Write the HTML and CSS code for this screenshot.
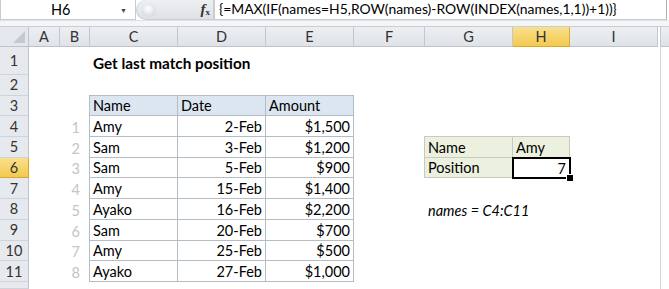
FILE: index.html
```html
<!DOCTYPE html>
<html>
    <head>
        <title>Get last match position</title>
        <meta name="viewport" content="width=device-width, initial-scale=1">
        <link rel="stylesheet" href="styles.css">
    </head>
    <body>
        <div class="formula-bar">
            <div class="name-box"><span>H6</span><span class="drop">&#9660;</span></div>
            <div class="grip"><span class="knob"></span><span class="fx"><i>f</i><sub>x</sub></span></div>
            <div class="formula">{=MAX(IF(names=H5,ROW(names)-ROW(INDEX(names,1,1))+1))}</div>
        </div>
        <div class="strip"></div>

        <div class="sheet">
            <div class="corner"><span class="tri"></span></div>
            <div class="colhead">A</div>
            <div class="colhead">B</div>
            <div class="colhead">C</div>
            <div class="colhead">D</div>
            <div class="colhead">E</div>
            <div class="colhead">F</div>
            <div class="colhead">G</div>
            <div class="colhead active">H</div>
            <div class="colhead">I</div>
            <div class="colhead edge"></div>

            <div class="rowhead" style="grid-row: 2;">1</div>
            <div class="rowhead" style="grid-row: 3;">2</div>
            <div class="rowhead" style="grid-row: 4;">3</div>
            <div class="rowhead" style="grid-row: 5;">4</div>
            <div class="rowhead" style="grid-row: 6;">5</div>
            <div class="rowhead active" style="grid-row: 7;">6</div>
            <div class="rowhead" style="grid-row: 8;">7</div>
            <div class="rowhead" style="grid-row: 9;">8</div>
            <div class="rowhead" style="grid-row: 10;">9</div>
            <div class="rowhead" style="grid-row: 11;">10</div>
            <div class="rowhead" style="grid-row: 12;">11</div>
            <div class="rowhead" style="grid-row: 13;"></div>
            <div class="rightedge"></div>

            <div class="title">Get last match position</div>

            <!-- data table C3:E11 -->
            <div class="cell th first" style="grid-row: 4; grid-column: 4;">Name</div>
            <div class="cell th" style="grid-row: 4; grid-column: 5;">Date</div>
            <div class="cell th" style="grid-row: 4; grid-column: 6;">Amount</div>

            <div class="idx" style="grid-row: 5;">1</div>
            <div class="cell first" style="grid-row: 5; grid-column: 4;">Amy</div>
            <div class="cell num" style="grid-row: 5; grid-column: 5;">2-Feb</div>
            <div class="cell num" style="grid-row: 5; grid-column: 6;">$1,500</div>

            <div class="idx" style="grid-row: 6;">2</div>
            <div class="cell first" style="grid-row: 6; grid-column: 4;">Sam</div>
            <div class="cell num" style="grid-row: 6; grid-column: 5;">3-Feb</div>
            <div class="cell num" style="grid-row: 6; grid-column: 6;">$1,200</div>

            <div class="idx" style="grid-row: 7;">3</div>
            <div class="cell first" style="grid-row: 7; grid-column: 4;">Sam</div>
            <div class="cell num" style="grid-row: 7; grid-column: 5;">5-Feb</div>
            <div class="cell num" style="grid-row: 7; grid-column: 6;">$900</div>

            <div class="idx" style="grid-row: 8;">4</div>
            <div class="cell first" style="grid-row: 8; grid-column: 4;">Amy</div>
            <div class="cell num" style="grid-row: 8; grid-column: 5;">15-Feb</div>
            <div class="cell num" style="grid-row: 8; grid-column: 6;">$1,400</div>

            <div class="idx" style="grid-row: 9;">5</div>
            <div class="cell first" style="grid-row: 9; grid-column: 4;">Ayako</div>
            <div class="cell num" style="grid-row: 9; grid-column: 5;">16-Feb</div>
            <div class="cell num" style="grid-row: 9; grid-column: 6;">$2,200</div>

            <div class="idx" style="grid-row: 10;">6</div>
            <div class="cell first" style="grid-row: 10; grid-column: 4;">Sam</div>
            <div class="cell num" style="grid-row: 10; grid-column: 5;">20-Feb</div>
            <div class="cell num" style="grid-row: 10; grid-column: 6;">$700</div>

            <div class="idx" style="grid-row: 11;">7</div>
            <div class="cell first" style="grid-row: 11; grid-column: 4;">Amy</div>
            <div class="cell num" style="grid-row: 11; grid-column: 5;">25-Feb</div>
            <div class="cell num" style="grid-row: 11; grid-column: 6;">$500</div>

            <div class="idx" style="grid-row: 12;">8</div>
            <div class="cell first" style="grid-row: 12; grid-column: 4;">Ayako</div>
            <div class="cell num" style="grid-row: 12; grid-column: 5;">27-Feb</div>
            <div class="cell num" style="grid-row: 12; grid-column: 6;">$1,000</div>

            <!-- lookup G5:H6 -->
            <div class="cell lk top first" style="grid-row: 6; grid-column: 8;">Name</div>
            <div class="cell lk top" style="grid-row: 6; grid-column: 9;">Amy</div>
            <div class="cell lk first" style="grid-row: 7; grid-column: 8;">Position</div>
            <div class="cell num selected" style="grid-row: 7; grid-column: 9;">7</div>

            <div class="note">names = C4:C11</div>
        </div>
    </body>
</html>
```

FILE: styles.css
```css
* { box-sizing: border-box; }
body { margin: 0; width: 669px; height: 289px; overflow: hidden; background: #fff; font-family: Lato, "Open Sans", sans-serif; font-size: 14.5px; color: #000; }

/* formula bar */
.formula-bar { display: flex; height: 20px; background: #fff; }
.name-box { width: 136px; display: flex; align-items: center; justify-content: space-between; padding: 0 8px 0 50px; border: 1px solid #c6ccd4; border-top: 0; }
.name-box .drop { font-size: 7px; color: #444; }
.grip { width: 78px; display: flex; align-items: center; justify-content: space-between; padding-right: 3px; background: linear-gradient(#eef0f3, #dde1e6); border-radius: 10px 0 0 10px; border: 1px solid #c9ced5; border-top: 0; }
.grip .knob { width: 14px; height: 14px; margin-left: 5px; border-radius: 50%; background: radial-gradient(circle at 45% 40%, #fff, #d8dce2 70%); }
.fx { font-family: "Liberation Serif", serif; font-weight: bold; font-size: 15px; color: #333; }
.fx sub { font-size: 9px; vertical-align: -1px; }
.formula { flex: 1; padding-left: 4px; font-size: 13.9px; line-height: 18px; border: 1px solid #c6ccd4; border-top: 0; border-right-color: #aab2bc; margin-right: 2px; white-space: nowrap; overflow: hidden; }
.strip { height: 7px; background: #f3f5f7; border-top: 1px solid #dfe3e8; border-bottom: 1px solid #c9ced6; }

/* sheet grid */
.sheet { display: grid; height: 262px; grid-template-columns: 29px 31px 30px 88px 88px 88px 71px 88px 57px 88px 1fr; grid-template-rows: 20px 28px repeat(10, 20.7px) 1fr; }
.corner { grid-row: 1; grid-column: 1; background: #e4e8ed; border-right: 1px solid #bcc3cc; border-bottom: 1px solid #bcc3cc; position: relative; }
.corner .tri { position: absolute; right: 3px; bottom: 3px; width: 0; height: 0; border-left: 12px solid transparent; border-bottom: 12px solid #c3c9d1; }
.colhead { grid-row: 1; background: linear-gradient(#eceff2, #dfe3e8); border-right: 1px solid #c2c8cf; border-bottom: 1px solid #bcc3cc; display: flex; align-items: center; justify-content: center; color: #333; }
.colhead.active { background: linear-gradient(#f9e08d, #f3c94f); border-right-color: #d9ae3a; border-bottom-color: #d9a92c; }
.colhead.edge { border-right: 0; border-left: 1px solid #c2c8cf; margin-left: 2px; }
.rowhead { grid-column: 1; background: #e6e9ed; border-right: 1px solid #bcc3cc; border-bottom: 1px solid #cfd4da; display: flex; align-items: center; justify-content: center; color: #333; }
.rowhead.active { background: linear-gradient(#f9e08d, #f3c94f); border-bottom-color: #d9a92c; border-right-color: #d9a92c; }
.rightedge { grid-column: 11; grid-row: 2 / 14; margin-left: 2px; border-left: 1px solid #d3d7dc; background: #fff; }

.title { grid-row: 2; grid-column: 4 / 8; font-weight: bold; font-size: 15.3px; display: flex; align-items: flex-end; padding: 0 0 3px 3px; }

.cell { display: flex; align-items: flex-end; padding: 0 3px 1px 3px; border-right: 1px solid #b4bcc5; border-bottom: 1px solid #b4bcc5; white-space: nowrap; }
.cell.first { border-left: 1px solid #b4bcc5; margin-left: -1px; }
.cell.th { background: #dce6f1; border-top: 1px solid #b4bcc5; margin-top: -1px; }
.cell.num { justify-content: flex-end; }
.cell.lk { background: #ebf1de; border-color: #c6cbbd; }
.cell.lk.top { border-top: 1px solid #c6cbbd; margin-top: -1px; }
.cell.selected { position: relative; border: 0; outline: 2px solid #000; outline-offset: -1px; padding-right: 4px; }
.cell.selected::after { content: ""; position: absolute; right: -4px; bottom: -4px; width: 6px; height: 6px; background: #000; border: 1px solid #fff; }

.idx { grid-column: 3; display: flex; align-items: flex-end; justify-content: flex-end; padding: 0 10px 1px 0; color: #c4c4c4; }
.note { grid-row: 9; grid-column: 8 / 11; font-style: italic; display: flex; align-items: flex-end; padding: 0 0 1px 3px; }
```
